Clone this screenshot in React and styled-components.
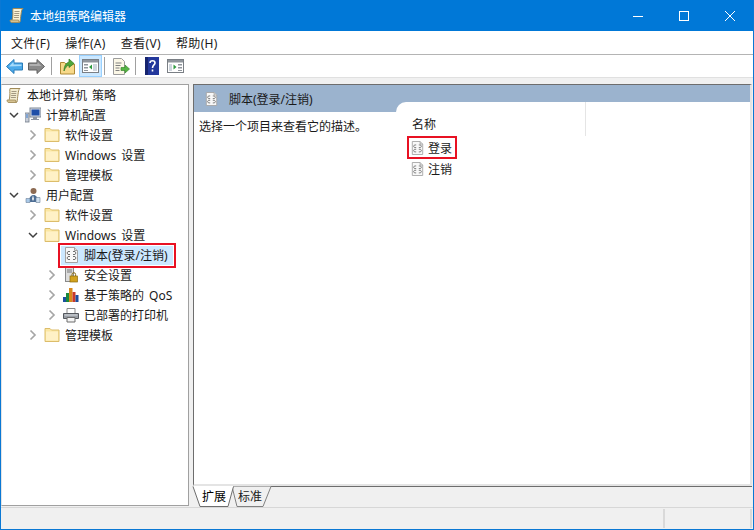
import React from 'react';
import styled, { createGlobalStyle } from 'styled-components';

const Global = createGlobalStyle`
  html, body { margin: 0; padding: 0; background: #f0f0f0; }
  * { box-sizing: border-box; }
`;

const Window = styled.div`
  width: 754px;
  height: 530px;
  display: flex;
  flex-direction: column;
  border: 1px solid #0a78d4;
  border-top: 0;
  background: #f0f0f0;
  overflow: hidden;
  font-family: "Noto Sans", "Noto Sans CJK SC", sans-serif;
  font-size: 12px;
  color: #1a1a1a;
`;

const TitleBar = styled.div`
  height: 31px;
  flex: none;
  display: flex;
  align-items: center;
  background: #0078d7;
  color: #fff;
  padding-left: 8px;
`;
const TitleText = styled.div`
  flex: 1;
  padding-left: 5px;
`;
const WinButton = styled.div`
  width: 46px;
  height: 31px;
  display: flex;
  align-items: center;
  justify-content: center;
`;

const MenuBar = styled.div`
  height: 24px;
  flex: none;
  display: flex;
  align-items: center;
  padding-left: 2px;
  background: #fff;
  border-bottom: 1px solid #b4b4b4;
`;
const MenuItem = styled.div`
  padding: 0 7px 0 8px;
  letter-spacing: 0.35px;
`;

const ToolBar = styled.div`
  height: 23px;
  flex: none;
  display: flex;
  align-items: center;
  background: #fff;
  padding-left: 2px;
  border-bottom: 1px solid #e0e0e0;
`;
const ToolButton = styled.div`
  width: ${p => p.$w}px;
  height: 22px;
  display: flex;
  align-items: center;
  justify-content: center;
  background: ${p => (p.$active ? '#cce8ff' : 'transparent')};
  border: 1px solid ${p => (p.$active ? '#99d1ff' : 'transparent')};
`;
const ToolSep = styled.div`
  width: 1px;
  height: 18px;
  background: #a0a0a0;
  margin: 0 ${p => p.$r}px 0 ${p => p.$l}px;
`;

const Main = styled.div`
  flex: 1;
  min-height: 0;
  display: flex;
  gap: 4px;
  padding: 6px 1px 0 0;
`;

const TreePane = styled.div`
  width: 188px;
  flex: none;
  margin-bottom: 1px;
  background: #fff;
  border: 1px solid #a0a0a0;
  border-left-color: #e4e4e4;
`;
const TreeRow = styled.div`
  height: 20px;
  display: flex;
  align-items: center;
  padding-left: ${p => p.$indent}px;
`;
const Twisty = styled.div`
  width: 14px;
  height: 20px;
  flex: none;
  display: flex;
  align-items: center;
  justify-content: center;
  margin-right: 4px;
`;
const TreeIcon = styled.div`
  width: 16px;
  height: 16px;
  flex: none;
  display: flex;
  align-items: center;
  justify-content: center;
  margin-right: 5px;
`;
const TreeLabel = styled.span`
  white-space: nowrap;
  word-spacing: 2px;
`;
const SelectedItem = styled.div`
  display: flex;
  align-items: center;
  height: 25px;
  width: 118px;
  margin-left: -5px;
  padding-left: 3px;
  border: 2px solid #e81123;
  background: #cce8ff;
  box-shadow: inset 0 0 0 1px #fff;
  position: relative;
  z-index: 1;
`;

const DetailColumn = styled.div`
  flex: 1;
  min-width: 0;
  display: flex;
  flex-direction: column;
`;
const DetailPane = styled.div`
  height: 402px;
  flex: none;
  display: flex;
  flex-direction: column;
  background: #fff;
  border-top: 1px solid #6d6d6d;
  border-left: 1px solid #6d6d6d;
  border-right: 2px solid #e4e4e4;
  border-bottom: 2px solid #e4e4e4;
`;
const DetailHeader = styled.div`
  height: 27px;
  flex: none;
  display: flex;
  align-items: center;
  gap: 11px;
  padding-left: 11px;
  background: #9bb3ce;
`;
const DetailBody = styled.div`
  flex: 1;
  display: flex;
`;
const Description = styled.div`
  width: 202px;
  flex: none;
  padding: 5px 0 0 5px;
`;
const ListPane = styled.div`
  flex: 1;
  margin-top: -10px;
  background: #fff;
  border-top-left-radius: 10px;
  padding-left: 4px;
`;
const ColumnHeader = styled.div`
  height: 34px;
  width: 186px;
  padding: 13px 0 0 12px;
  border-right: 1px solid #e5e5e5;
`;
const ListRow = styled.div`
  height: 20px;
  display: flex;
  align-items: center;
  gap: 4px;
  padding-left: 11px;
`;
const MarkedRow = styled(ListRow)`
  width: 50px;
  height: 23px;
  margin-left: 7px;
  padding-left: 2px;
  border: 2px solid #e81123;
`;

const TabStrip = styled.div`
  height: 21px;
  flex: none;
  display: flex;
  position: relative;
  padding-left: 9px;
  border-top: 1px solid #6d6d6d;
`;
const TabShapes = styled.svg`
  position: absolute;
  left: -1px;
  top: -1px;
`;
const Tab = styled.div`
  width: 36px;
  height: 20px;
  line-height: 19px;
  position: relative;
  color: ${p => (p.$active ? '#000' : '#222')};
`;

const StatusBar = styled.div`
  height: 22px;
  flex: none;
  display: flex;
  justify-content: flex-end;
  align-items: center;
  border-top: 1px solid #d7d7d7;
  background: #f0f0f0;
`;
const StatusCell = styled.div`
  width: ${p => p.$w}px;
  height: 19px;
  border-left: 2px solid #d9d9d9;
`;

const Chevron = ({ open }) => (
  <svg width="12" height="12" viewBox="0 0 12 12" fill="none">
    {open
      ? <path d="M2 4 L6 8 L10 4" stroke="#404040" strokeWidth="1.5" />
      : <path d="M3.500 1.500 L8 6 L3.500 10.500" stroke="#a6a6a6" strokeWidth="1.7" />}
  </svg>
);

const Folder = () => (
  <svg width="16" height="16" viewBox="0 0 16 16">
    <path d="M1 1.500h5l1.500 1.500H15v11.500H1z" fill="#fbe7a3" stroke="#dcbd6b" strokeWidth="1" />
    <path d="M2 4.500h12v9H2z" fill="#fff1c6" />
  </svg>
);

const Script = ({ size = 15 }) => (
  <svg width={size} height={size + 1} viewBox="0 0 15 16">
    <path d="M1.500.5h9l3 3v12h-12z" fill="#f8f8f8" stroke="#a3a3a3" />
    <path d="M10.500.5v3h3" fill="#dedede" stroke="#a3a3a3" />
    <path d="M6 4.500H4L3 6l1 1.500h2M9 4.500h2L12 6l-1 1.500H9M6 9.500H4L3 11l1 1.500h2M9 9.500h2L12 11l-1 1.500H9" fill="none" stroke="#6f6f6f" strokeWidth="1" />
  </svg>
);

const Scroll = ({ light }) => (
  <svg width="16" height="17" viewBox="0 0 16 17">
    <path d="M4 1.500h10c-1.500 1-1.500 3-2 6s-.5 5-1 7.500H2c1-1 1.500-3 1.800-6S3.500 3 4 1.500z" fill={light ? '#fbf3d5' : '#f3ecd0'} stroke="#a08a58" />
    <path d="M1 13h8.500c0 1 .3 2 1 2.500H2.500C1.500 15.500 1 14 1 13z" fill="#d6c291" stroke="#a08a58" strokeWidth=".8" />
    <path d="M5.500 4.500h5M5.300 6.500h5M5.100 8.500h5M4.900 10.500h5" stroke="#9a9078" strokeWidth=".9" />
  </svg>
);

const Computer = () => (
  <svg width="16" height="16" viewBox="0 0 16 16">
    <rect x="5" y="1" width="11" height="9" fill="#d8dde6" stroke="#7d8796" />
    <rect x="6.500" y="2.500" width="8" height="6" fill="#1f4fa8" />
    <path d="M8 10h4v2H8zM6 12h8v1H6z" fill="#8d95a3" />
    <rect x="0" y="6" width="4" height="9" fill="#c9ced8" stroke="#707a88" strokeWidth=".8" />
    <path d="M1 8h2M1 10h2" stroke="#3a7fd0" />
  </svg>
);

const User = () => (
  <svg width="16" height="17" viewBox="0 0 16 17">
    <circle cx="8.500" cy="4" r="3" fill="#8c6a52" />
    <path d="M4 15c0-5 2-7 4.500-7S13 10 13 15z" fill="#4c6d94" />
    <path d="M1 11.500h4v4H1z" fill="#a9c9e8" stroke="#6d8199" strokeWidth=".6" />
    <path d="M11 10.500h4v5h-4z" fill="#cfe0f0" stroke="#6d8199" strokeWidth=".6" />
    <path d="M8 8l1 4-1 2-1-2z" fill="#f5f5f5" />
  </svg>
);

const Secure = () => (
  <svg width="16" height="16" viewBox="0 0 16 16">
    <rect x="2.500" y="0.500" width="8" height="14" fill="#dcdcdc" stroke="#8a8a8a" />
    <path d="M4 3h5M4 5h5" stroke="#777" />
    <rect x="7" y="9" width="7.500" height="6" fill="#d2a21d" stroke="#8c6a0e" strokeWidth=".7" />
    <path d="M9 9V7.500a1.800 1.800 0 0 1 3.600 0V9" fill="none" stroke="#8c6a0e" />
  </svg>
);

const Chart = () => (
  <svg width="16" height="16" viewBox="0 0 16 16">
    <rect x="0" y="10" width="3" height="5" fill="#1c4fa0" />
    <rect x="3" y="6" width="3" height="9" fill="#1a8a3c" />
    <rect x="6" y="1" width="3.500" height="14" fill="#d88a1c" />
    <rect x="9.500" y="5" width="3" height="10" fill="#c93a2c" />
    <rect x="12.500" y="8" width="3" height="7" fill="#1c4fa0" />
  </svg>
);

const Printer = () => (
  <svg width="16" height="16" viewBox="0 0 16 16">
    <path d="M4 1.500h8v5H4z" fill="#fff" stroke="#8a8a8a" />
    <path d="M.5 6.500h15v5H.5z" fill="#9a9fa6" stroke="#55595f" />
    <path d="M4 10.500h8v4.500H4z" fill="#f4f4f4" stroke="#6d6d6d" />
    <path d="M1.500 8h13" stroke="#d8dce0" />
  </svg>
);

const BackArrow = () => (
  <svg width="17" height="15" viewBox="0 0 17 15">
    <path d="M.5 7.500L8 .5v3.500h8.500v7H8v3.500z" fill="#4aa9ea" stroke="#2a7cb8" />
    <path d="M3 7.500L7.500 3v2.500h8v1.500z" fill="#a8dcfb" />
  </svg>
);
const ForwardArrow = () => (
  <svg width="17" height="15" viewBox="0 0 17 15">
    <path d="M16.500 7.500L9 .5v3.500H.5v7H9v3.500z" fill="#8a8a8a" stroke="#606060" />
    <path d="M1.500 5h8V3l4 4H1.500z" fill="#b0b0b0" />
  </svg>
);
const UpFolder = () => (
  <svg width="15" height="18" viewBox="0 0 15 18">
    <path d="M.5 5.500h4l1.500 1.500h8.500v10H.5z" fill="#f7d98a" stroke="#b08a35" />
    <path d="M4 14c0-5 2-8 5-9V2l5 4.500-5 4V8c-2 .5-4 3-5 6z" fill="#4fa63a" stroke="#2f7a20" strokeWidth=".7" />
  </svg>
);
const PanelToggle = ({ flip }) => (
  <svg width="17" height="14" viewBox="0 0 17 14">
    <rect x=".5" y=".5" width="16" height="13" fill="#fff" stroke="#7a7f85" />
    <rect x="1" y="1" width="15" height="2.500" fill="#8f959c" />
    {flip ? (
      <>
        <path d="M2 5h3v7H2z" fill="#cfd6de" />
        <path d="M6.500 5.500v5l3-2.500z" fill="#2f9a40" />
        <path d="M11 5h4v1.500h-4zM11 8h4v1.500h-4zM11 11h4v1h-4z" fill="#8f959c" />
      </>
    ) : (
      <>
        <path d="M2 5h4v1.500H2zM2 8h4v1.500H2zM2 11h4v1H2z" fill="#8f959c" />
        <path d="M10 5.500v5L7 8z" fill="#2f9a40" />
        <path d="M11 5h4v7h-4z" fill="#cfd6de" />
      </>
    )}
  </svg>
);
const ExportList = () => (
  <svg width="17" height="17" viewBox="0 0 17 17">
    <path d="M.5.5h8l3 3v13H.5z" fill="#fbf7e6" stroke="#9c9c9c" />
    <path d="M2.500 5h6M2.500 7.500h5M2.500 10h4M2.500 12.500h4" stroke="#808080" />
    <path d="M8 9.500h4V7l4.500 4-4.500 4v-2.500H8z" fill="#55b544" stroke="#3c8a2e" strokeWidth=".7" />
  </svg>
);
const Help = () => (
  <svg width="14" height="18" viewBox="0 0 14 18">
    <rect width="14" height="18" fill="#23389c" />
    <path d="M0 0h3v18H0z" fill="#16246e" />
    <path d="M5 6c0-3 5-3 5 0 0 2-2.500 2-2.500 5M7.500 12.500v2" fill="none" stroke="#fff" strokeWidth="1.600" />
  </svg>
);

const treeRows = [
  { level: 1, open: true, icon: <Computer />, label: '计算机配置' },
  { level: 2, icon: <Folder />, label: '软件设置' },
  { level: 2, icon: <Folder />, label: 'Windows 设置' },
  { level: 2, icon: <Folder />, label: '管理模板' },
  { level: 1, open: true, icon: <User />, label: '用户配置' },
  { level: 2, icon: <Folder />, label: '软件设置' },
  { level: 2, open: true, icon: <Folder />, label: 'Windows 设置' },
  { level: 3, selected: true, icon: <Script />, label: '脚本(登录/注销)' },
  { level: 3, icon: <Secure />, label: '安全设置' },
  { level: 3, icon: <Chart />, label: '基于策略的 QoS' },
  { level: 3, icon: <Printer />, label: '已部署的打印机' },
  { level: 2, icon: <Folder />, label: '管理模板' },
];

const indents = { 1: 5, 2: 24, 3: 43 };

export default function App() {
  return (
    <Window>
      <Global />
      <TitleBar>
        <Scroll light />
        <TitleText>本地组策略编辑器</TitleText>
        <WinButton>
          <svg width="10" height="10"><path d="M0 5.500h10" stroke="#fff" /></svg>
        </WinButton>
        <WinButton>
          <svg width="10" height="10"><rect x=".5" y=".5" width="9" height="9" fill="none" stroke="#fff" /></svg>
        </WinButton>
        <WinButton>
          <svg width="10" height="10"><path d="M0 0l10 10M10 0L0 10" stroke="#fff" /></svg>
        </WinButton>
      </TitleBar>

      <MenuBar>
        <MenuItem>文件(F)</MenuItem>
        <MenuItem>操作(A)</MenuItem>
        <MenuItem>查看(V)</MenuItem>
        <MenuItem>帮助(H)</MenuItem>
      </MenuBar>

      <ToolBar>
        <ToolButton $w={22}><BackArrow /></ToolButton>
        <ToolButton $w={23}><ForwardArrow /></ToolButton>
        <ToolSep $l={3} $r={4} />
        <ToolButton $w={23}><UpFolder /></ToolButton>
        <ToolButton $w={23} $active><PanelToggle /></ToolButton>
        <ToolSep $l={2} $r={4} />
        <ToolButton $w={24}><ExportList /></ToolButton>
        <ToolSep $l={2} $r={5} />
        <ToolButton $w={22}><Help /></ToolButton>
        <ToolButton $w={24}><PanelToggle flip /></ToolButton>
      </ToolBar>

      <Main>
        <TreePane>
          <TreeRow $indent={4}>
            <TreeIcon><Scroll /></TreeIcon>
            <TreeLabel>本地计算机 策略</TreeLabel>
          </TreeRow>
          {treeRows.map((row, i) => (
            <TreeRow key={i} $indent={indents[row.level]}>
              <Twisty>{!row.selected && <Chevron open={row.open} />}</Twisty>
              {row.selected ? (
                <SelectedItem>
                  <TreeIcon>{row.icon}</TreeIcon>
                  <TreeLabel>{row.label}</TreeLabel>
                </SelectedItem>
              ) : (
                <>
                  <TreeIcon>{row.icon}</TreeIcon>
                  <TreeLabel>{row.label}</TreeLabel>
                </>
              )}
            </TreeRow>
          ))}
        </TreePane>

        <DetailColumn>
          <DetailPane>
            <DetailHeader>
              <Script size={13} />
              <span>脚本(登录/注销)</span>
            </DetailHeader>
            <DetailBody>
              <Description>选择一个项目来查看它的描述。</Description>
              <ListPane>
                <ColumnHeader>名称</ColumnHeader>
                <MarkedRow>
                  <Script size={13} />
                  <span>登录</span>
                </MarkedRow>
                <ListRow>
                  <Script size={13} />
                  <span>注销</span>
                </ListRow>
              </ListPane>
            </DetailBody>
          </DetailPane>
          <TabStrip>
            <TabShapes width="100" height="22" viewBox="0 0 100 22" fill="none">
              <path d="M40 .5 L45 20.500 H71 L79 .5" fill="#f0f0f0" stroke="#808080" />
              <path d="M1 0 L8 20.500 H36 L41.500 0 Z" fill="#fff" />
              <path d="M1 .5 L8 20.500 H36 L41.500 .5" stroke="#6d6d6d" />
            </TabShapes>
            <Tab $active>扩展</Tab>
            <Tab>标准</Tab>
          </TabStrip>
        </DetailColumn>
      </Main>

      <StatusBar>
        <StatusCell $w={87} />
        <StatusCell $w={3} />
      </StatusBar>
    </Window>
  );
}
